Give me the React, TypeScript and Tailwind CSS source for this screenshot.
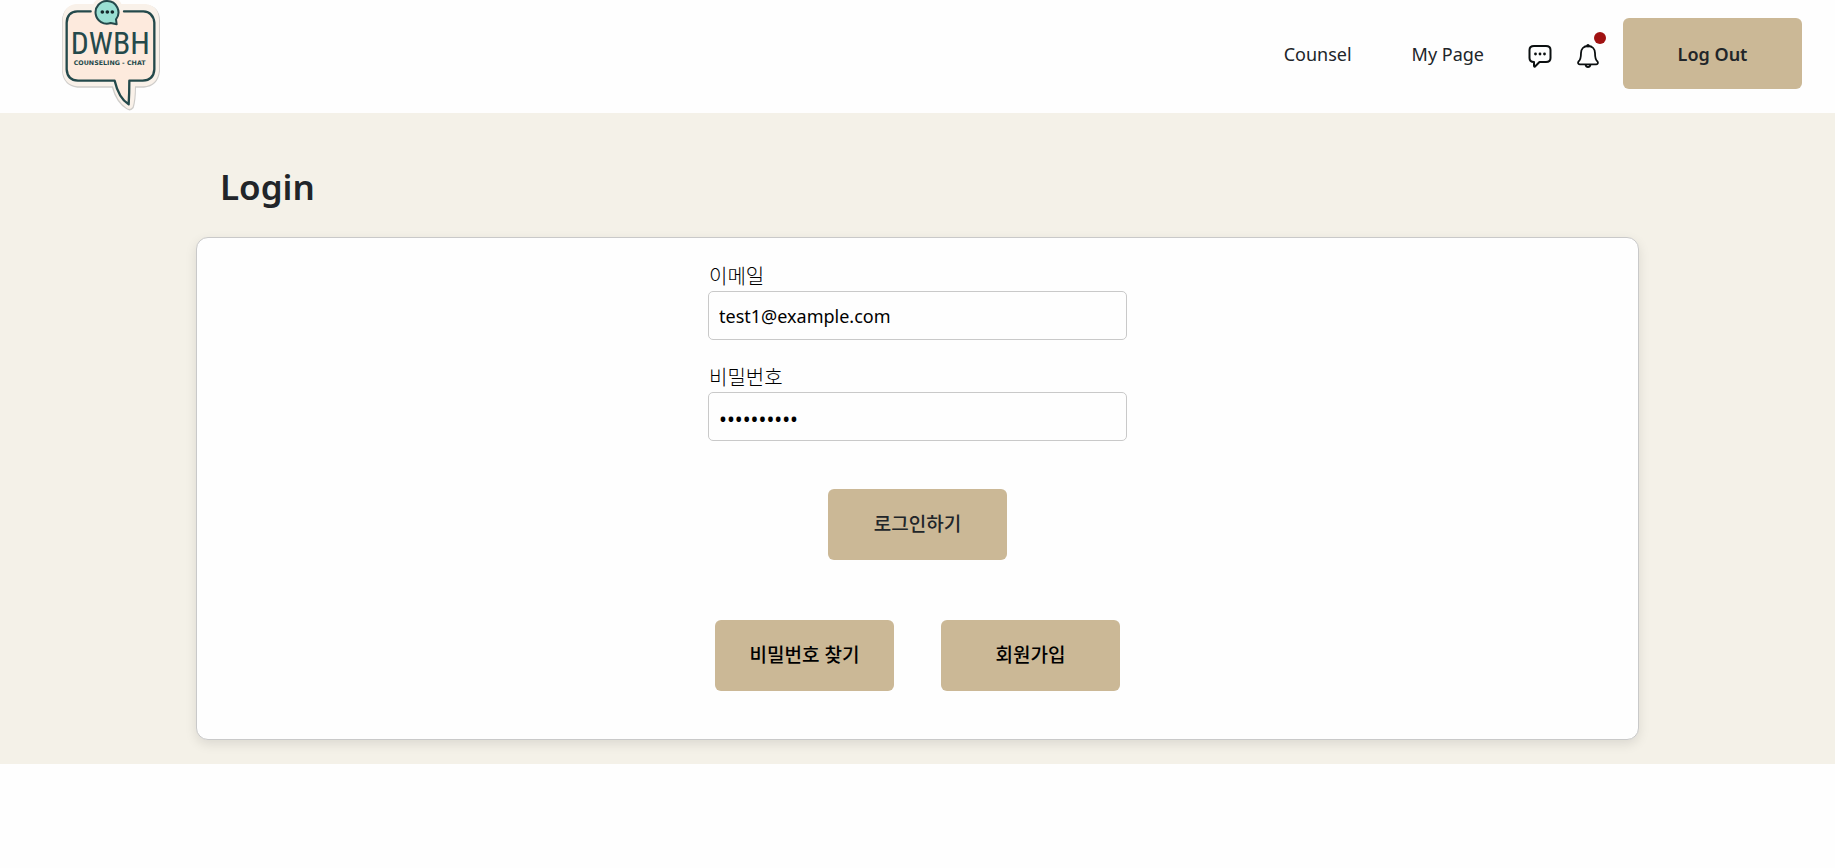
import { useState } from "react";

const actionButton =
  "flex h-[71px] w-[179px] items-center justify-center rounded-md bg-[#cbb896]";

const fieldLabel = "block pl-px text-xl leading-7 font-light text-black";

const fieldInput =
  "block h-[49px] w-full rounded-[5px] border border-[#c9c9c9] px-2.5 text-black outline-none";

function Logo() {
  return (
    <svg viewBox="60 0 300 336" className="h-28 w-[100px]" role="img" aria-label="DWBH Counseling Chat">
      <path
        d="M108 14 H160 Q168 -4 202 -4 Q238 -4 244 14 H318 Q358 18 360 60 V214 Q354 260 312 263 H288 Q288 300 281 324 Q272 336 260 328 Q228 308 216 263 H112 Q70 258 66 214 V60 Q70 18 108 14Z"
        fill="#cfcdca"
      />
      <path
        d="M108 12 H160 Q168 -8 202 -8 Q238 -8 244 12 H316 Q355 16 357 58 V212 Q352 256 310 259 H285 Q285 298 278 321 Q270 331 260 324 Q230 304 219 259 H112 Q72 254 68 212 V58 Q72 16 108 12Z"
        fill="#f9f1e9"
      />
      <path
        d="M152 34 H112 Q81 36 80 68 V208 Q82 240 114 242 H224 Q236 294 266 313 Q268 280 268 242 H308 Q341 240 343 208 V68 Q340 36 310 34 H252"
        fill="#fdeadd"
        stroke="#24494b"
        strokeWidth="7"
        strokeLinecap="round"
        strokeLinejoin="round"
      />
      <path
        d="M202 3 A34 34 0 1 0 212 69 L230 73 L228 58 A34 34 0 0 0 202 3Z"
        fill="#9adfd3"
        stroke="#24494b"
        strokeWidth="6"
        strokeLinejoin="round"
      />
      <g fill="#15282b">
        <circle cx="187" cy="36" r="5.5" />
        <circle cx="202" cy="36" r="5.5" />
        <circle cx="217" cy="36" r="5.5" />
      </g>
      <text
        x="211"
        y="162"
        textAnchor="middle"
        fontFamily="'Roboto Condensed', Roboto, sans-serif"
        fontWeight="400"
        fontSize="95"
        fill="#24494b"
      >
        DWBH
      </text>
      <text
        x="209"
        y="194"
        textAnchor="middle"
        fontFamily="'DejaVu Sans', sans-serif"
        fontWeight="700"
        fontSize="19"
        fill="#24494b"
      >
        COUNSELING - CHAT
      </text>
    </svg>
  );
}

function ChatIcon() {
  return (
    <svg viewBox="0 0 24 24" className="size-6" fill="none" stroke="#0b0f10" strokeWidth="2" strokeLinejoin="round">
      <path d="M6 2 H18 Q22.500 2 22.500 6 V14 Q22.500 18 18 18 H11.500 L7 22.500 Q6 23 6 21.500 V18 Q1.500 18 1.500 14 V6 Q1.500 2 6 2Z" />
      <g fill="#0b0f10" stroke="none">
        <circle cx="7.500" cy="10" r="1.400" />
        <circle cx="12" cy="10" r="1.400" />
        <circle cx="16.500" cy="10" r="1.400" />
      </g>
    </svg>
  );
}

function BellIcon() {
  return (
    <svg viewBox="0 0 24 24" className="size-6" fill="none" stroke="#0b0f10" strokeWidth="1.800" strokeLinejoin="round">
      <path d="M12 2 C7.500 2 5 5 5 9 C5 14 4.500 16 2.500 17.500 C1.600 18.800 2.200 20.300 3.600 20.300 H20.400 C21.800 20.300 22.400 18.800 21.500 17.500 C19.500 16 19 14 19 9 C19 5 16.500 2 12 2Z" />
      <path d="M9.500 20.500 Q10 23 12 23 Q14 23 14.500 20.500" />
      <circle cx="12" cy="1.800" r="1.700" fill="#0b0f10" stroke="none" />
    </svg>
  );
}

export default function App() {
  const [email, setEmail] = useState("test1@example.com");
  const [password, setPassword] = useState("password12");

  return (
    <div className="min-h-screen bg-[#fefefe] font-['Noto_Sans','Noto_Sans_CJK_KR',sans-serif] text-[#212529]">
      <header className="flex h-[113px] items-start justify-between pr-[33px] pl-[60px]">
        <a href="#home">
          <Logo />
        </a>
        <nav className="flex items-center pt-[18px] text-lg">
          <a href="#counsel">Counsel</a>
          <a href="#mypage" className="ml-15">My Page</a>
          <button type="button" aria-label="Chat" className="mt-1 ml-11">
            <ChatIcon />
          </button>
          <button type="button" aria-label="Notifications" className="relative mt-1 ml-6">
            <BellIcon />
            <span className="absolute -top-3 -right-1.5 size-3 rounded-full bg-[#a01212]" />
          </button>
          <button type="button" className={`${actionButton} ml-[23px] font-semibold`}>
            Log Out
          </button>
        </nav>
      </header>

      <main className="bg-[#f4f1e8] px-[196px] pt-12 pb-6">
        <h1 className="mb-6 pl-6 text-[35px] leading-[52px] font-semibold">Login</h1>
        <section className="rounded-xl border border-[#c9c9c9] bg-[#fefefe] pt-[25px] pb-12 shadow-[0_4px_12px_rgba(0,0,0,0.1)]">
          <form className="mx-auto flex w-[419px] flex-col items-center" onSubmit={(e) => e.preventDefault()}>
            <div className="w-full">
              <label htmlFor="email" className={fieldLabel}>이메일</label>
              <input
                id="email"
                type="email"
                value={email}
                onChange={(e) => setEmail(e.target.value)}
                className={`${fieldInput} text-lg`}
              />
            </div>
            <div className="mt-6 w-full">
              <label htmlFor="password" className={fieldLabel}>비밀번호</label>
              <input
                id="password"
                type="password"
                value={password}
                onChange={(e) => setPassword(e.target.value)}
                className={`${fieldInput} pt-1 text-[21px]`}
              />
            </div>
            <button type="submit" className={`${actionButton} mt-12 text-[19px] font-medium`}>로그인하기</button>
            <div className="mt-15 flex gap-[47px]">
              <button type="button" className={`${actionButton} text-[19px] font-medium text-black`}>비밀번호 찾기</button>
              <button type="button" className={`${actionButton} text-[19px] font-medium text-black`}>회원가입</button>
            </div>
          </form>
        </section>
      </main>
    </div>
  );
}
